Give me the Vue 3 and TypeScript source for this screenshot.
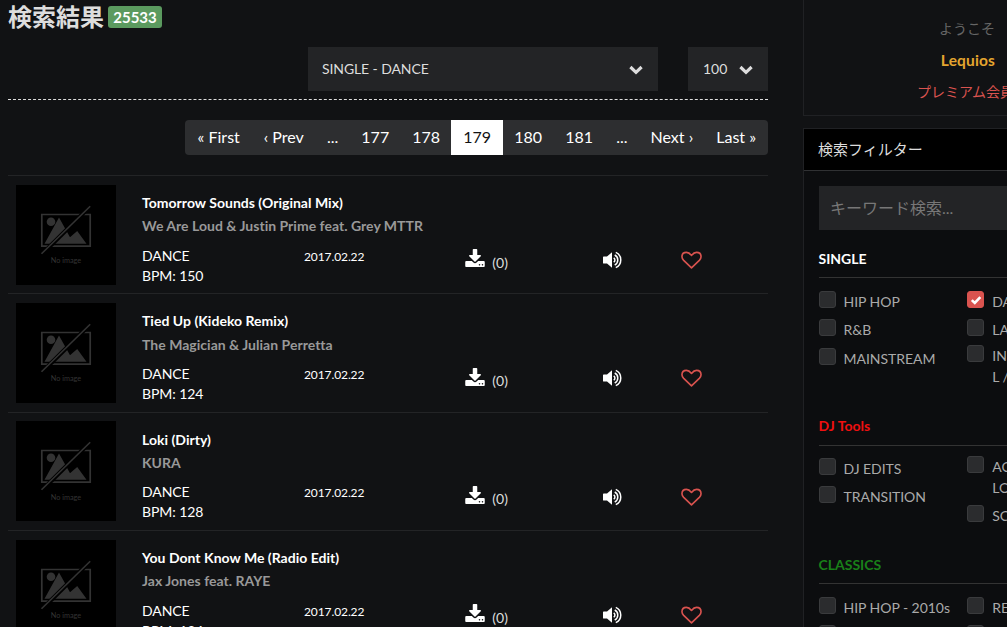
<script setup lang="ts">
interface Track { title: string; artist: string; genre: string; bpm: number; date: string; downloads: number }
interface FilterItem { lines: string[]; checked?: boolean }
interface FilterGroup { name: string; kind: string; left: FilterItem[]; right: FilterItem[] }

const total = 25533
const pages = ['« First', '‹ Prev', '...', '177', '178', '179', '180', '181', '...', 'Next ›', 'Last »']
const currentPage = '179'

const tracks: Track[] = [
  { title: 'Tomorrow Sounds (Original Mix)', artist: 'We Are Loud & Justin Prime feat. Grey MTTR', genre: 'DANCE', bpm: 150, date: '2017.02.22', downloads: 0 },
  { title: 'Tied Up (Kideko Remix)', artist: 'The Magician & Julian Perretta', genre: 'DANCE', bpm: 124, date: '2017.02.22', downloads: 0 },
  { title: 'Loki (Dirty)', artist: 'KURA', genre: 'DANCE', bpm: 128, date: '2017.02.22', downloads: 0 },
  { title: 'You Dont Know Me (Radio Edit)', artist: 'Jax Jones feat. RAYE', genre: 'DANCE', bpm: 124, date: '2017.02.22', downloads: 0 },
]

const groups: FilterGroup[] = [
  {
    name: 'SINGLE', kind: 'single',
    left: [{ lines: ['HIP HOP'] }, { lines: ['R&B'] }, { lines: ['MAINSTREAM'] }],
    right: [{ lines: ['DANCE'], checked: true }, { lines: ['LATIN'] }, { lines: ['INSTRUMENTA', 'L / ACAPELLA'] }],
  },
  {
    name: 'DJ Tools', kind: 'tools',
    left: [{ lines: ['DJ EDITS'] }, { lines: ['TRANSITION'] }],
    right: [{ lines: ['ACAPELLA', 'LOOPS'] }, { lines: ['SCRATCH'] }],
  },
  {
    name: 'CLASSICS', kind: 'classics',
    left: [{ lines: ['HIP HOP - 2010s'] }, { lines: ['HIP HOP - 2000s'] }],
    right: [{ lines: ['REGGAE'] }, { lines: ['R&B'] }],
  },
]
</script>

<template>
  <div class="page">
    <main class="results">
      <h1 class="heading">検索結果<span class="count">{{ total }}</span></h1>
      <div class="selects">
        <div class="select wide">
          <span>SINGLE - DANCE</span>
          <svg class="chevron" viewBox="0 0 14 10"><path d="M1.4 2 7 7.3 12.6 2" /></svg>
        </div>
        <div class="select narrow">
          <span>100</span>
          <svg class="chevron" viewBox="0 0 14 10"><path d="M1.4 2 7 7.3 12.6 2" /></svg>
        </div>
      </div>
      <nav class="pager">
        <a v-for="(p, i) in pages" :key="i" :class="{ active: p === currentPage }">{{ p }}</a>
      </nav>
      <section class="tracks">
        <article v-for="t in tracks" :key="t.title" class="track">
          <div class="cover">
            <svg class="no-photo" viewBox="0 0 52 50">
              <path class="frame" d="M1.8 9.5h48.4v31.7H1.8z" />
              <circle cx="11" cy="16.8" r="4.3" />
              <path d="M4.5 38.7 19 12.5 30 32.2 37.2 26 46.5 38.7z" />
              <path class="slash-gap" d="M2.2 49 50 1.5" />
              <path class="slash" d="M1.5 48.8 50.2 1.2" />
            </svg>
            <span class="cover-label">No image</span>
          </div>
          <div class="info">
            <div class="title">{{ t.title }}</div>
            <div class="artist">{{ t.artist }}</div>
            <div class="details">
              <div class="genre">{{ t.genre }}<br>BPM: {{ t.bpm }}</div>
              <div class="date">{{ t.date }}</div>
              <div class="download">
                <svg viewBox="64 0 1664 1536"><path fill-rule="evenodd" d="M1344 1344q0-26-19-45t-45-19-45 19-19 45 19 45 45 19 45-19 19-45zm256 0q0-26-19-45t-45-19-45 19-19 45 19 45 45 19 45-19 19-45zm128-224v320q0 40-28 68t-68 28h-1472q-40 0-68-28t-28-68v-320q0-40 28-68t68-28h465l135 136q58 56 136 56t136-56l136-136h464q40 0 68 28t28 68zm-325-569q17 41-14 70l-448 448q-18 19-45 19t-45-19l-448-448q-31-29-14-70 17-39 59-39h256v-448q0-26 19-45t45-19h256q26 0 45 19t19 45v448h256q42 0 59 39z" /></svg>
                <span>({{ t.downloads }})</span>
              </div>
              <svg class="volume" viewBox="0 0 20 18">
                <path class="speaker" d="M0 6.2Q0 5.5.7 5.5H4L9 1.3V16.7L4 12.6H.7Q0 12.6 0 11.9z" />
                <path class="wave" d="M10.7 6.8a2.6 2.6 0 0 1 0 4.4M11.7 4a5.6 5.6 0 0 1 0 10M12.8 1.4a8.3 8.3 0 0 1 0 15.2" />
              </svg>
              <svg class="heart" viewBox="0 0 22 19"><path d="M11 17.5 2.8 9.6C1.5 8.2 1 7.2 1 5.8 1 3 2.9 1.2 5.7 1.2 8.3 1.2 9.9 3 11 4.4 12.1 3 13.7 1.2 16.3 1.2 19.1 1.2 21 3 21 5.8c0 1.4-.5 2.4-1.8 3.8z" /></svg>
            </div>
          </div>
        </article>
      </section>
    </main>

    <aside class="sidebar">
      <section class="member">
        <div class="welcome">ようこそ</div>
        <div class="user">Lequios</div>
        <div class="plan">プレミアム会員</div>
      </section>
      <section class="filter">
        <h2 class="filter-title">検索フィルター</h2>
        <div class="filter-body">
          <div class="search">キーワード検索...</div>
          <div v-for="g in groups" :key="g.name" class="group" :class="g.kind">
            <h3>{{ g.name }}</h3>
            <div class="columns">
              <div v-for="(col, c) in [g.left, g.right]" :key="c" class="column">
                <label v-for="item in col" :key="item.lines[0]" class="option" :class="{ double: item.lines.length > 1 }">
                  <span class="box" :class="{ checked: item.checked }">
                    <svg v-if="item.checked" viewBox="0 0 12 10"><path d="M1.8 5.1 4.8 8 10.3 2.2" /></svg>
                  </span>
                  <span class="label"><span v-for="line in item.lines" :key="line" class="line">{{ line }}</span></span>
                </label>
              </div>
            </div>
          </div>
        </div>
      </section>
    </aside>
  </div>
</template>

<style>
html, body { margin: 0; overflow: hidden; background: #111214; }
</style>

<style scoped>
.page {
  width: 1007px; height: 627px; overflow: hidden; display: flex;
  background: #111214; color: #fff;
  font-family: Lato, "Noto Sans CJK JP", sans-serif; font-size: 15px;
}
.page * { box-sizing: border-box; }
.results { width: 760px; margin-left: 8px; flex: none; }
.heading {
  margin: 0; height: 47px; padding-top: 5px; display: flex; align-items: flex-start;
  font-size: 24px; line-height: 23px; font-weight: 700; color: #ddd; white-space: nowrap;
}
.count {
  margin: 1px 0 0 4px; width: 54px; height: 22px; border-radius: 3px; background: #5b9a5f;
  color: #fff; font-size: 15px; line-height: 22px; text-align: center;
}
.selects { height: 53px; display: flex; justify-content: flex-end; gap: 30px; border-bottom: 1px dashed #ddd; }
.select {
  height: 44px; padding: 0 15px 1px 14px; display: flex; align-items: center; justify-content: space-between;
  background: #232426; color: #ddd; font-size: 14px;
}
.wide { width: 350px; letter-spacing: -0.1px; }
.narrow { width: 80px; padding-left: 15px; }
.chevron { width: 14px; height: 10px; margin-top: 2px; fill: none; stroke: #ddd; stroke-width: 3.2; }
.pager { height: 35px; width: 583px; margin: 20px 0 20px auto; padding-left: 1px; display: flex; border-radius: 4px; overflow: hidden; background: #2d2e30; }
.pager a { padding: 0 11.55px; font-size: 16px; line-height: 34px; height: 35px; white-space: nowrap; }
.pager a:first-child { padding-right: 12.4px; }
.pager .active { background: #fff; color: #111214; padding: 0 12.2px; margin: 0 -0.6px; }
.track { height: 118.4px; display: flex; border-top: 1px solid #232426; padding: 8.6px 0 0 8px; }
.cover {
  width: 100px; height: 100px; flex: none; background: #000; display: flex; flex-direction: column; align-items: center;
  padding-top: 20px; color: #343434;
}
.no-photo { width: 52px; height: 50px; fill: #333; flex: none; }
.no-photo .frame { fill: none; stroke: #333; stroke-width: 1.7; }
.no-photo .slash { stroke: #333; stroke-width: 1.6; }
.no-photo .slash-gap { stroke: #000; stroke-width: 4.2; }
.cover-label { font-size: 7.3px; line-height: 10px; margin-top: 1.5px; }
.info { margin-left: 26px; flex: 1; padding-top: 6.4px; }
.title, .artist { font-size: 14px; line-height: 23.3px; font-weight: 700; white-space: nowrap; letter-spacing: 0.02px; }
.artist { color: #999; }
.details { display: flex; height: 42px; margin-top: 8px; }
.genre { width: 162px; font-size: 14px; line-height: 20px; letter-spacing: -0.08px; }
.date { width: 161px; font-size: 12px; line-height: 22px; letter-spacing: -0.1px; }
.download { width: 138px; display: flex; align-items: flex-start; }
.download svg { width: 20px; height: 18px; margin-top: 3.7px; fill: #fff; }
.download span { margin-left: 7.3px; margin-top: 7px; line-height: 20px; color: #ddd; font-size: 14px; }
.volume { width: 20px; height: 18px; margin-top: 5.3px; }
.speaker { fill: #fff; }
.wave { fill: none; stroke: #fff; stroke-width: 1.5; }
.heart { width: 21px; height: 18.5px; margin: 5.5px 0 0 58px; fill: none; stroke: #d9534f; stroke-width: 1.7; stroke-linejoin: round; }

.sidebar { width: 256px; flex: none; margin-left: 35px; }
.member { height: 116px; border: 1px solid #202124; border-top: 0; padding: 13px 62px 0 0; text-align: right; font-size: 14px; line-height: 31px; white-space: nowrap; }
.welcome { color: #666; padding-right: 1px; }
.user { color: #e5a52f; font-weight: 700; font-size: 15.5px; line-height: 32px; padding-right: 1px; letter-spacing: 0.15px; }
.plan { color: #d9534f; margin-right: -18px; }
.filter { margin-top: 12px; height: 560px; border: 1px solid #202124; background: #0c0d0f; }
.filter-title { margin: 0; height: 42px; padding-left: 14px; background: #000; border-bottom: 1px solid #303133; font-size: 15px; font-weight: 400; line-height: 41px; color: #ddd; }
.filter-body { padding: 15px 0 0 15px; }
.search { height: 44px; padding-left: 11px; background: #232426; color: #777; font-size: 16px; line-height: 44px; white-space: nowrap; }
.group h3 { margin: 0 0 0 -0.5px; height: 29px; border-bottom: 1px solid #333; font-size: 14px; line-height: 20px; font-weight: 700; }
.group.single { padding-top: 19px; height: 186px; }
.group.single h3 { height: 29px; }
.group.tools { height: 139px; }
.group.tools h3 { height: 30px; color: #f01010; }
.classics h3 { color: #198019; }
.columns { display: flex; padding-top: 13px; }
.tools .columns { padding-top: 12px; }
.column { width: 148px; flex: none; }
.option { display: flex; margin-bottom: 7px; color: #aaa; font-size: 14px; line-height: 21px; letter-spacing: -0.05px; }
.option .label { margin-left: 7.6px; white-space: nowrap; }
.column:last-child .label { margin-left: 8.3px; }
.line { display: block; }
.single .column:first-child .option:last-child { padding-top: 1px; }
.double { margin-top: -2px; }
.box { width: 17px; height: 17px; flex: none; border: 1px solid #3a3b3d; border-radius: 3px; background: #2b2c2e; display: flex; align-items: center; justify-content: center; }
.box.checked { background: #d9534f; border-color: #d9534f; }
.box svg { width: 12px; height: 10px; flex: none; fill: none; stroke: #fff; stroke-width: 2.6; }
</style>
